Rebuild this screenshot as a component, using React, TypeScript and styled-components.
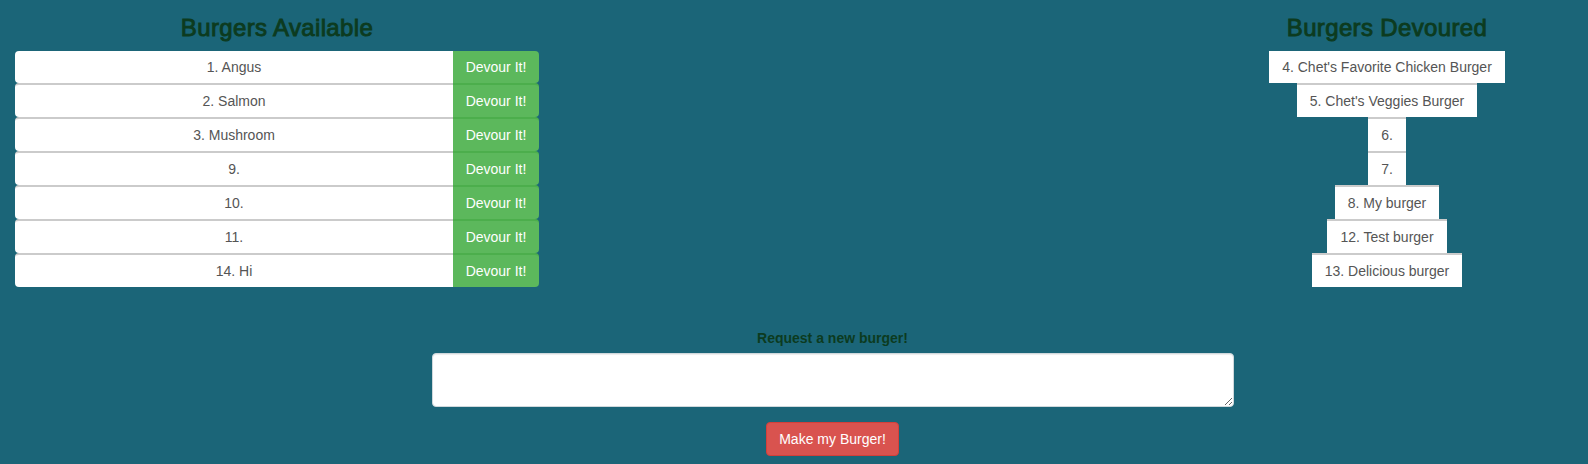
import * as React from 'react';
import styled, { createGlobalStyle } from 'styled-components';

const GlobalStyle = createGlobalStyle`
  html, body {
    margin: 0;
    padding: 0;
  }
  body {
    background: #1b6578;
    font-family: "Liberation Sans", Arial, Helvetica, sans-serif;
    font-size: 14px;
    line-height: 20px;
    color: #555;
  }
  * {
    box-sizing: border-box;
  }
`;

const Page = styled.div`
  padding: 15px 15px 8px;
`;

const Columns = styled.div`
  display: grid;
  grid-template-columns: 524px 1fr 372px;
`;

interface ColumnProps {
  centered?: boolean;
}

const Column = styled.section<ColumnProps>`
  display: flex;
  flex-direction: column;
  align-items: ${(props) => (props.centered ? 'center' : 'stretch')};
`;

// Helvetica Neue medium in the original, faked with a thin stroke on regular
const Heading = styled.h3`
  margin: 0 0 10px;
  font-size: 24px;
  line-height: 26px;
  font-weight: 400;
  letter-spacing: 0.35px;
  -webkit-text-stroke: 0.9px #0c3b1f;
  color: #0c3b1f;
  text-align: center;
`;

const List = styled.ul`
  list-style: none;
  margin: 0;
  padding: 0;
  display: flex;
  flex-direction: column;
`;

const BurgerName = styled.span`
  flex: 1;
  background: #fff;
  border-radius: 4px 0 0 4px;
  padding: 6px 15px;
  text-align: center;
  color: #555;
`;

const DevourButton = styled.button`
  width: 86px;
  background: #5cb85c;
  color: #fff;
  border: none;
  border-radius: 0 4px 4px 0;
  padding: 6px 12px;
  font-family: inherit;
  font-size: 14px;
  line-height: 20px;
  cursor: pointer;
`;

const Row = styled.li`
  display: flex;
  height: 32px;

  & + & {
    height: 34px;
  }
  & + & ${BurgerName} {
    border-top: 2px solid #cbcbcb;
  }
  & + & ${DevourButton} {
    border-top: 2px solid #4cae4c;
  }
`;

const DevouredList = styled.ul`
  list-style: none;
  margin: 0;
  padding: 0;
  display: flex;
  flex-direction: column;
  align-items: center;
`;

const DevouredItem = styled.li`
  background: #fff;
  padding: 6px 13px;
  color: #555;

  & + & {
    border-top: 2px solid #cbcbcb;
  }
`;

const RequestForm = styled.form`
  margin-top: 41px;
  padding-left: 77px;
  display: flex;
  flex-direction: column;
  align-items: center;
`;

const Label = styled.label`
  font-weight: 700;
  color: #0c3b1f;
  margin-bottom: 5px;
`;

const BurgerInput = styled.textarea`
  width: 802px;
  height: 54px;
  border: 1px solid #cfd8dc;
  border-radius: 4px;
  padding: 6px 12px;
  background: #fff;
  box-shadow: inset 0 1px 1px rgba(0, 0, 0, 0.075);
  font-family: inherit;
  font-size: 14px;
  resize: vertical;
  margin-bottom: 15px;
`;

const SubmitButton = styled.button`
  background: #d9534f;
  border: 1px solid #d43f3a;
  border-radius: 4px;
  color: #fff;
  padding: 6px 12px;
  font-family: inherit;
  font-size: 14px;
  line-height: 20px;
  cursor: pointer;
`;

const available = [
  { id: 1, name: 'Angus' },
  { id: 2, name: 'Salmon' },
  { id: 3, name: 'Mushroom' },
  { id: 9, name: '' },
  { id: 10, name: '' },
  { id: 11, name: '' },
  { id: 14, name: 'Hi' },
];

const devoured = [
  { id: 4, name: "Chet's Favorite Chicken Burger" },
  { id: 5, name: "Chet's Veggies Burger" },
  { id: 6, name: '' },
  { id: 7, name: '' },
  { id: 8, name: 'My burger' },
  { id: 12, name: 'Test burger' },
  { id: 13, name: 'Delicious burger' },
];

const App = (): JSX.Element => {
  const [text, setText] = React.useState('');

  return (
    <>
      <GlobalStyle />
      <Page>
        <Columns>
          <Column>
            <Heading>Burgers Available</Heading>
            <List>
              {available.map((burger) => (
                <Row key={burger.id}>
                  <BurgerName>
                    {burger.id}. {burger.name}
                  </BurgerName>
                  <DevourButton type="button">Devour It!</DevourButton>
                </Row>
              ))}
            </List>
          </Column>
          <div />
          <Column centered>
            <Heading>Burgers Devoured</Heading>
            <DevouredList>
              {devoured.map((burger) => (
                <DevouredItem key={burger.id}>
                  {burger.id}. {burger.name}
                </DevouredItem>
              ))}
            </DevouredList>
          </Column>
        </Columns>
        <RequestForm onSubmit={(e) => e.preventDefault()}>
          <Label htmlFor="burger-name">Request a new burger!</Label>
          <BurgerInput id="burger-name" value={text} onChange={(e) => setText(e.target.value)} />
          <SubmitButton type="submit">Make my Burger!</SubmitButton>
        </RequestForm>
      </Page>
    </>
  );
};

export default App;
